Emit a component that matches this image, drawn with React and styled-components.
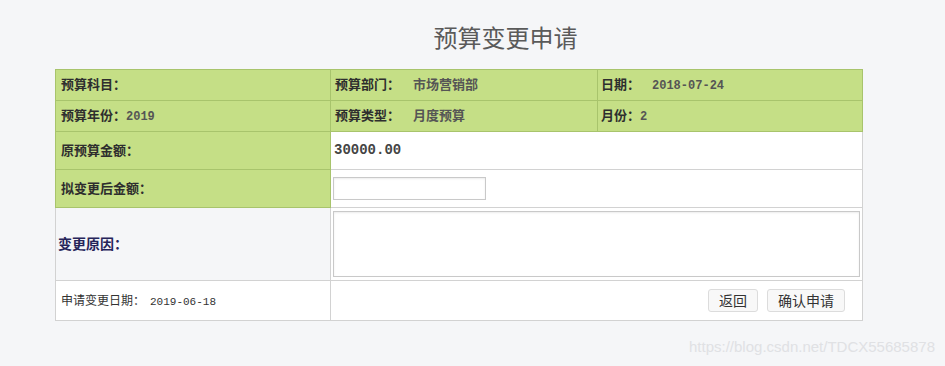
import React from 'react';
import styled, { createGlobalStyle } from 'styled-components';

const GlobalStyle = createGlobalStyle`
  body {
    margin: 0;
    background: #f5f6f8;
    font-family: "Liberation Mono", "Noto Sans CJK SC", monospace;
  }
`;

const Page = styled.div`
  display: flex;
  flex-direction: column;
  width: 945px;
  height: 366px;
`;

const Sheet = styled.div`
  width: 807px;
  margin-left: 55px;
`;

const Title = styled.h2`
  margin: 0 0 17px;
  padding: 22px 0 0 94px;
  text-align: center;
  font: normal 24px/30px "Noto Sans CJK SC", sans-serif;
  color: #5a5a5a;
`;

const Table = styled.table`
  width: 807px;
  border-collapse: collapse;
  table-layout: fixed;
`;

const Row = styled.tr`
  height: ${(p) => p.$h}px;
`;

const Cell = styled.td`
  padding: 0 0 0 ${(p) => p.$pad ?? 5}px;
  border: 1px solid ${(p) => (p.$green ? '#a8c46c' : '#d2d2d2')};
  background: ${(p) => (p.$green ? '#c5df86' : p.$muted ? '#f5f6f8' : '#fff')};
  font-size: 13px;
  line-height: 18px;
  color: #333;
  vertical-align: middle;
`;

const Label = styled.span`
  font-family: "Noto Sans CJK SC", sans-serif;
  font-weight: 700;
  font-size: ${(p) => p.$size ?? 13}px;
  color: ${(p) => p.$color ?? '#2e2e2e'};
`;

const Value = styled.span`
  margin-left: ${(p) => p.$gap ?? 0}px;
  font-weight: 700;
  font-size: ${(p) => (p.$cjk ? 13 : 12)}px;
  color: #555;
  font-family: ${(p) => (p.$cjk ? '"Noto Sans CJK SC", sans-serif' : '"Liberation Mono", monospace')};
`;

const Amount = styled.span`
  font-family: "Liberation Mono", monospace;
  font-weight: 700;
  font-size: 14px;
  color: #444;
`;

const Input = styled.input`
  display: block;
  width: 153px;
  height: 23px;
  box-sizing: border-box;
  border: 1px solid #c9c9c9;
  box-shadow: inset 0 1px 2px rgba(0, 0, 0, 0.08);
  background: #fff;
`;

const Area = styled.textarea`
  display: block;
  width: 527px;
  height: 66px;
  box-sizing: border-box;
  border: 1px solid #c9c9c9;
  box-shadow: inset 0 1px 2px rgba(0, 0, 0, 0.08);
  resize: none;
  background: #fff;
`;

const FootLabel = styled.span`
  font-family: "Noto Sans CJK SC", sans-serif;
  font-size: 12px;
  color: #333;
`;

const FootDate = styled.span`
  margin-left: 5px;
  font-family: "Liberation Mono", monospace;
  font-size: 11px;
  color: #333;
`;

const Actions = styled.div`
  display: flex;
  justify-content: flex-end;
  gap: 9px;
  padding-right: 17px;
`;

const Button = styled.button`
  height: 23px;
  padding: 0 10px;
  border: 1px solid #dcdcdc;
  border-radius: 3px;
  background: #f8f8f8;
  font: 14px/21px "Noto Sans CJK SC", sans-serif;
  color: #333;
`;

const Watermark = styled.div`
  display: flex;
  justify-content: flex-end;
  padding: 17px 10px 0 0;
  font: 15px/18px "Liberation Sans", sans-serif;
  color: #e0e1e4;
`;

export default function App() {
  return (
    <Page>
      <GlobalStyle />
      <Sheet>
        <Title>预算变更申请</Title>
        <Table>
          <colgroup>
            <col style={{ width: 275 }} />
            <col style={{ width: 267 }} />
            <col style={{ width: 265 }} />
          </colgroup>
          <tbody>
            <Row $h={31}>
              <Cell $green><Label>预算科目：</Label></Cell>
              <Cell $green $pad={4}>
                <Label>预算部门：</Label>
                <Value $cjk $gap={13}>市场营销部</Value>
              </Cell>
              <Cell $green $pad={3}>
                <Label>日期：</Label>
                <Value $gap={12}>2018-07-24</Value>
              </Cell>
            </Row>
            <Row $h={31}>
              <Cell $green>
                <Label>预算年份：</Label>
                <Value>2019</Value>
              </Cell>
              <Cell $green $pad={4}>
                <Label>预算类型：</Label>
                <Value $cjk $gap={13}>月度预算</Value>
              </Cell>
              <Cell $green $pad={3}>
                <Label>月份：</Label>
                <Value>2</Value>
              </Cell>
            </Row>
            <Row $h={38}>
              <Cell $green><Label>原预算金额：</Label></Cell>
              <Cell colSpan={2} $pad={3}><Amount>30000.00</Amount></Cell>
            </Row>
            <Row $h={38}>
              <Cell $green><Label>拟变更后金额：</Label></Cell>
              <Cell colSpan={2} $pad={2}><Input /></Cell>
            </Row>
            <Row $h={73}>
              <Cell $muted $pad={2}>
                <Label $size={14} $color="#26245a">变更原因：</Label>
              </Cell>
              <Cell colSpan={2} $pad={2}><Area /></Cell>
            </Row>
            <Row $h={40}>
              <Cell>
                <FootLabel>申请变更日期：</FootLabel>
                <FootDate>2019-06-18</FootDate>
              </Cell>
              <Cell colSpan={2} $pad={0}>
                <Actions>
                  <Button>返回</Button>
                  <Button>确认申请</Button>
                </Actions>
              </Cell>
            </Row>
          </tbody>
        </Table>
      </Sheet>
      <Watermark>https://blog.csdn.net/TDCX55685878</Watermark>
    </Page>
  );
}
